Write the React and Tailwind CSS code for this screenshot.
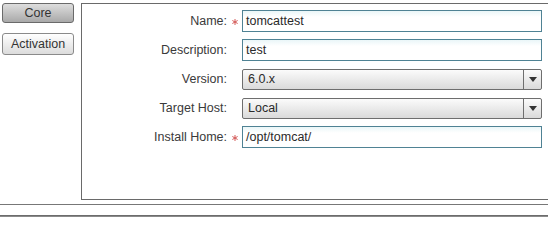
import React from "react";

const font = { fontFamily: '"Liberation Sans", Arial, sans-serif' };

function Tab({ label, active }) {
  return (
    <button
      type="button"
      className={`w-[72px] rounded-[3px] border text-[12.5px] text-[#333] ${
        active
          ? "h-[20px] border-[#6a6a6a] bg-gradient-to-b from-[#dedede] to-[#a9a9a9]"
          : "h-[22px] border-[#8a8a8a] bg-gradient-to-b from-[#ffffff] to-[#dcdcdc]"
      }`}
    >
      {label}
    </button>
  );
}

function Star() {
  // small red required marker
  return (
    <svg width="6" height="6" viewBox="0 0 6 6" className="mt-[1px]">
      <g stroke="#d45a58" strokeWidth="1" strokeLinecap="round">
        <path d="M3 0.4v5.2" />
        <path d="M0.7 1.7l4.6 2.6" />
        <path d="M0.7 4.3l4.6-2.6" />
      </g>
    </svg>
  );
}

function Row({ label, required, children }) {
  return (
    <div className="flex items-center h-[22px]">
      <div className="w-[145px] text-right text-[12.5px] text-[#3a3a3a]">{label}</div>
      <div className="w-[15px] flex items-center justify-center pl-[1px]">
        {required ? <Star /> : null}
      </div>
      {children}
    </div>
  );
}

function TextBox({ value }) {
  return (
    <div className="w-[300px] h-[22px] border border-[#4f8294] bg-gradient-to-b from-[#eaf6f8] to-white to-[30%] flex items-center px-[3px] text-[12.5px] text-[#2a2a2a]">
      {value}
    </div>
  );
}

function Select({ value }) {
  return (
    <div className="w-[300px] h-[21px] border border-[#6e6e6e] rounded-[2px] bg-gradient-to-b from-[#fbfbfb] to-[#dadada] flex items-center text-[12.5px] text-[#2a2a2a]">
      <div className="flex-1 px-[5px]">{value}</div>
      <div className="w-[18px] h-full border-l border-[#6e6e6e] flex items-center justify-center">
        <svg width="8" height="5" viewBox="0 0 8 5">
          <path d="M0 0h8L4 5z" fill="#333" />
        </svg>
      </div>
    </div>
  );
}

export default function App() {
  return (
    <div className="w-[548px] h-[217px] bg-white overflow-hidden" style={font}>
      <div className="flex pt-[3px]">
        <div className="w-[81px] pl-[2px] flex flex-col gap-[10px]">
          <Tab label="Core" active />
          <Tab label="Activation" />
        </div>
        <div className="flex-1 h-[197px] border-l border-t border-b border-[#6a6a6a] pt-[6px] flex flex-col gap-[7px]">
          <Row label="Name:" required>
            <TextBox value="tomcattest" />
          </Row>
          <Row label="Description:">
            <TextBox value="test" />
          </Row>
          <Row label="Version:">
            <Select value="6.0.x" />
          </Row>
          <Row label="Target Host:">
            <Select value="Local" />
          </Row>
          <Row label="Install Home:" required>
            <TextBox value="/opt/tomcat/" />
          </Row>
        </div>
      </div>
      <div className="mt-[4px] h-px bg-[#777]" />
      <div className="mt-[10px] h-[2px] bg-gradient-to-b from-[#5e5e5e] to-[#9a9a9a]" />
    </div>
  );
}
